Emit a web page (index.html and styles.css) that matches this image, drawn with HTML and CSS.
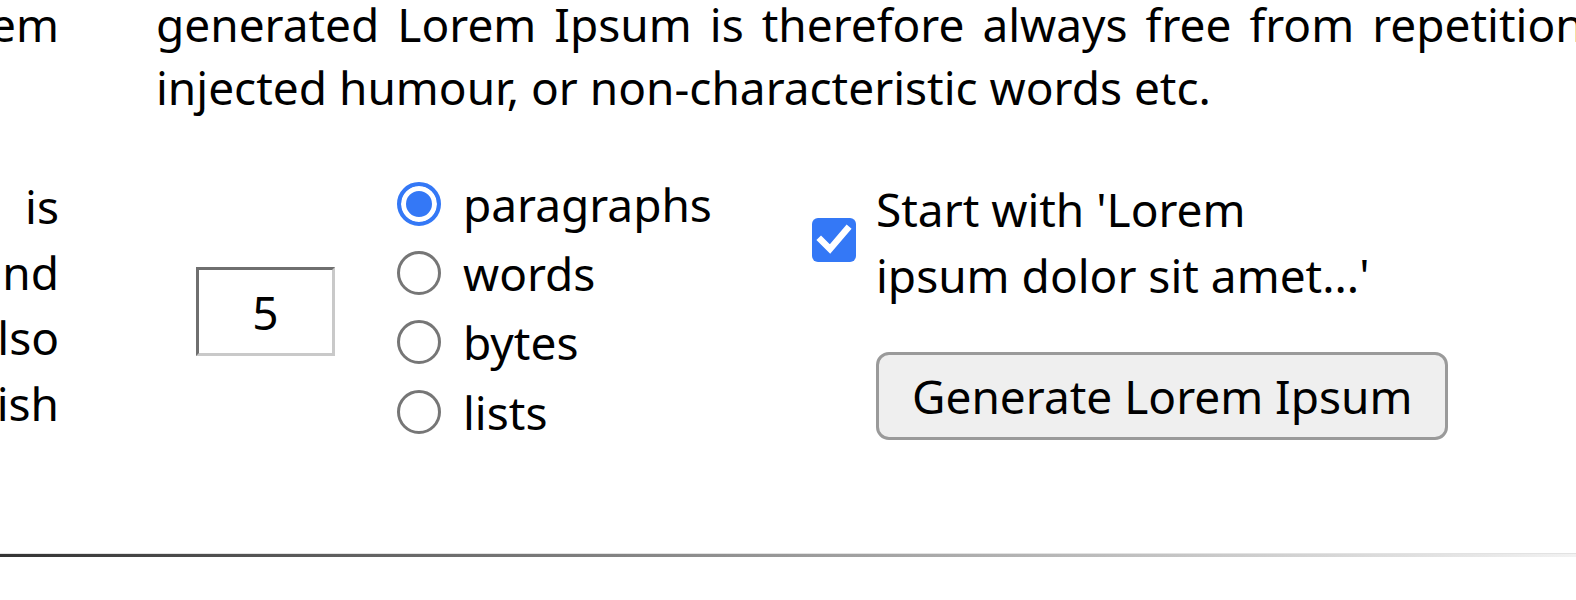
FILE: index.html
```html
<!DOCTYPE html>
<html lang="en">
<head>
    <meta charset="UTF-8">
    <meta name="viewport" content="width=device-width, initial-scale=1.0">
    <title>Lorem Ipsum Generator</title>
    <link rel="stylesheet" href="styles.css">
</head>
<body>
    <div class="page">
        <div class="side">
            <div class="side-text first">
                <span>will uncover many web sites still in their infancy. Lorem</span>
            </div>
            <div class="side-text second">
                <span class="loose">The standard chunk of Lorem Ipsum used since the 1500s is</span>
                <span>reproduced below for those interested. Sections 1.10.32 and</span>
                <span>1.10.33 from "de Finibus Bonorum et Malorum" by Cicero are also</span>
                <span>reproduced in their exact original form, accompanied by English</span>
            </div>
        </div>

        <div class="main">
            <p class="intro">generated Lorem Ipsum is therefore always free from repetition, injected humour, or non-characteristic words etc.</p>

            <form class="generator" id="lipsum">
                <input type="text" class="amount" name="amount" value="5" size="3">

                <div class="what">
                    <label class="choice"><input type="radio" name="what" value="paras" checked> paragraphs</label>
                    <label class="choice"><input type="radio" name="what" value="words"> words</label>
                    <label class="choice"><input type="radio" name="what" value="bytes"> bytes</label>
                    <label class="choice"><input type="radio" name="what" value="lists"> lists</label>
                </div>

                <div class="start">
                    <label class="start-row" for="start">
                        <input type="checkbox" id="start" name="start" value="yes" checked>
                        <span class="tick">
                            <svg width="44" height="44" viewBox="0 0 44 44">
                                <path d="M9 22 L18 31 L35 11" fill="none" stroke="#fff" stroke-width="6.5" stroke-linecap="square"/>
                            </svg>
                        </span>
                        <span class="start-label">Start with 'Lorem<br>ipsum dolor sit amet...'</span>
                    </label>
                    <button type="button" class="generate">Generate Lorem Ipsum</button>
                </div>
            </form>
        </div>
    </div>
    <hr class="divider">
</body>
</html>
```

FILE: styles.css
```css
html, body {
    margin: 0;
    overflow: hidden;
}

body {
    font-family: "Noto Sans", "Open Sans", sans-serif;
    font-size: 46px;
    color: #000;
    background-color: #fff;
}

.page {
    display: flex;
    margin-top: -7px;
}

/* left column, only the line endings show */
.side {
    flex: none;
    width: 59px;
    margin-right: 97px;
}

.side-text {
    display: flex;
    flex-direction: column;
    align-items: flex-end;
    white-space: nowrap;
}

.side-text.first {
    line-height: 63px;
}

.side-text.second {
    margin-top: 118px;
    line-height: 65.6px;
}

.side-text .loose {
    word-spacing: 22px;
}

.main {
    flex: none;
    width: 1440px;
}

.intro {
    margin: 0;
    line-height: 63px;
    text-align: justify;
}

.generator {
    display: flex;
    align-items: center;
    margin-top: 50px;
    padding-left: 40px;
}

.amount {
    box-sizing: border-box;
    width: 139px;
    height: 89px;
    margin: 8px 0 0;
    padding: 0;
    border: 3px solid;
    border-color: #6f6f6f #c9c9c9 #c9c9c9 #6f6f6f;
    font-family: inherit;
    font-size: 46px;
    text-align: center;
    color: #000;
}

.what {
    flex: none;
    width: 415px;
    margin-left: 62px;
}

.choice {
    display: flex;
    align-items: center;
    height: 69.3px;
    gap: 22px;
}

.choice input {
    appearance: none;
    box-sizing: border-box;
    width: 44px;
    height: 44px;
    margin: 0;
    border: 3px solid #767676;
    border-radius: 50%;
    background-color: #fff;
}

.choice input:checked {
    border: 4px solid #3478f6;
    background-color: #3478f6;
    box-shadow: inset 0 0 0 5px #fff;
}

.start {
    display: flex;
    flex-direction: column;
}

.start-row {
    display: flex;
    align-items: center;
    gap: 20px;
}

.start-row input {
    display: none;
}

.tick {
    width: 44px;
    height: 44px;
    margin-bottom: 4px;
    border-radius: 6px;
    background-color: #3478f6;
}

.tick svg {
    display: block;
}

.start-label {
    line-height: 66px;
}

.generate {
    align-self: flex-start;
    margin: 44px 0 0 64px;
    padding: 11px 33px;
    border: 3px solid #9a9a9a;
    border-radius: 13px;
    background-color: #efefef;
    font-family: inherit;
    font-size: 46px;
    line-height: 60px;
    color: #000;
}

.divider {
    height: 3px;
    margin: 107px 0 0;
    border: none;
    border-top: 1px solid #e2e2e2;
    background: linear-gradient(to right, #333, #999 50%, #f2f2f2);
}
```
